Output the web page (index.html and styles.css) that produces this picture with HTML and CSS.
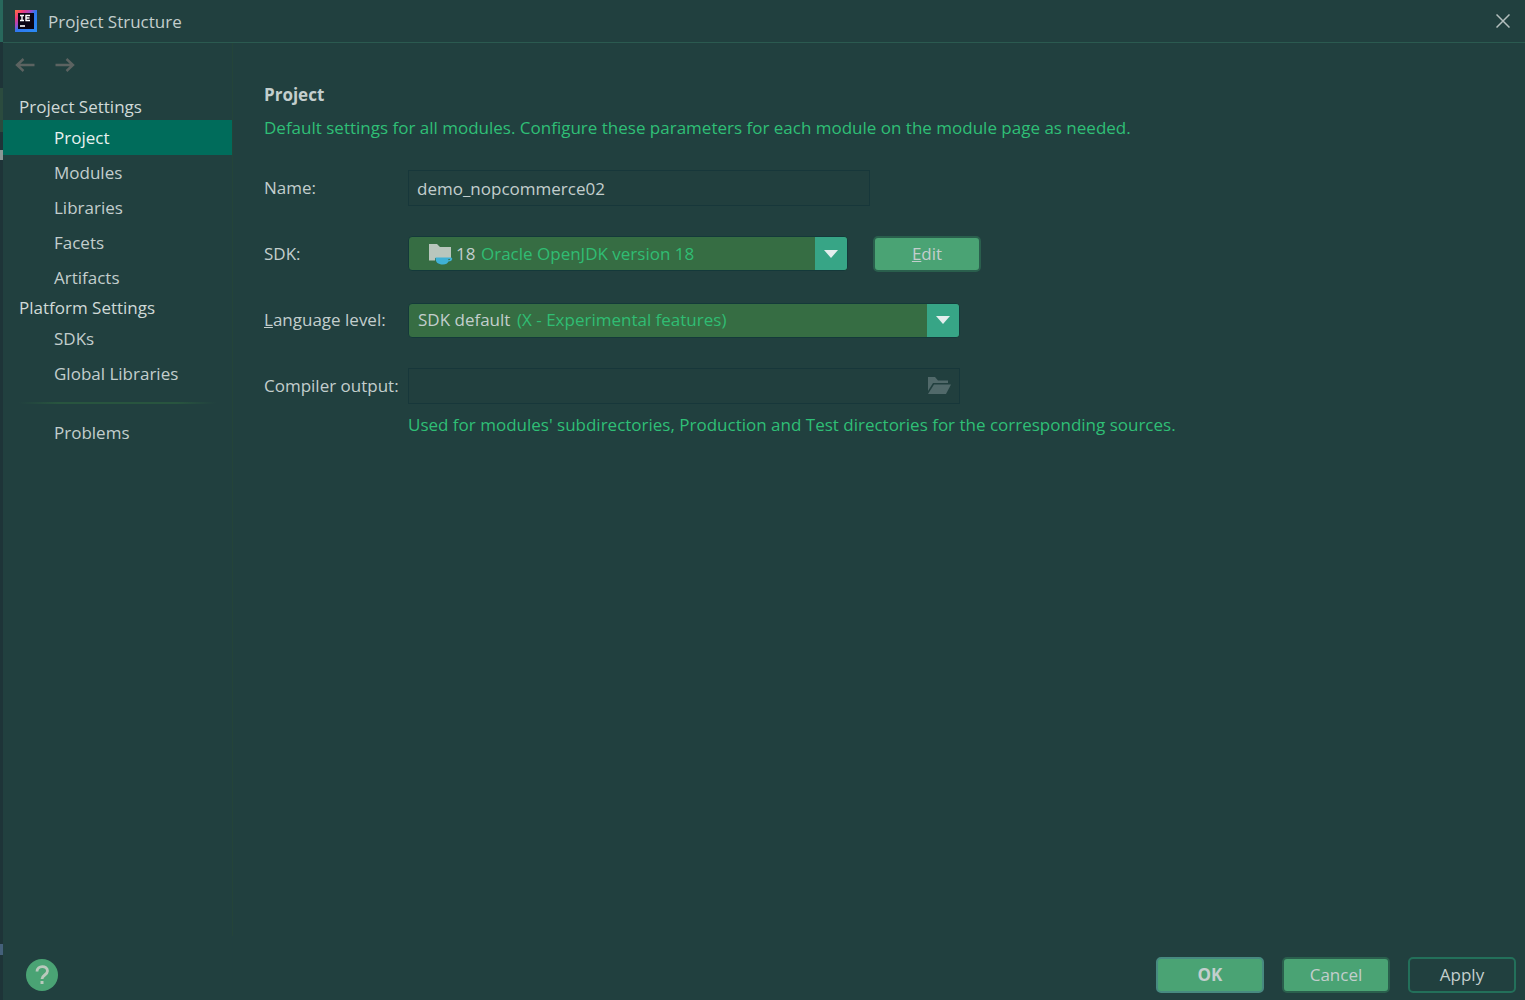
FILE: index.html
```html
<!DOCTYPE html>
<html lang="en">
<head>
<meta charset="utf-8">
<meta name="viewport" content="width=device-width, initial-scale=1">
<title>Project Structure</title>
<link rel="stylesheet" href="styles.css">
</head>
<body>
<div class="edge" aria-hidden="true"><i class="edge-cap"></i><i class="edge-tab"></i><i class="edge-text"></i><i class="edge-mark"></i></div>
<main class="dialog">
  <header class="titlebar">
    <svg class="logo" width="22" height="22" viewBox="0 0 22 22" aria-hidden="true">
      <defs>
        <linearGradient id="brand" x1="0" y1="0" x2="1" y2="1">
          <stop offset="0" stop-color="#f97a3c"/>
          <stop offset=".2" stop-color="#f03a78"/>
          <stop offset=".38" stop-color="#a04bc4"/>
          <stop offset=".5" stop-color="#2f78f0"/>
          <stop offset="1" stop-color="#2a8cf4"/>
        </linearGradient>
      </defs>
      <path d="M0 0h22v22H0z" fill="url(#brand)"/>
      <path d="M3 3h16v16H3z" fill="#0b0412"/>
      <path d="M5 5.500h4M7 5.500v5M5 10.500h4M15 5.500h-4v5h4M11 8h3.500" fill="none" stroke="#fff" stroke-width="1.400"/>
      <path d="M5 15.200h5v1.600H5z" fill="#fff"/>
    </svg>
    <h1 class="title">Project Structure</h1>
    <button class="close" type="button" aria-label="Close">
      <svg width="14" height="14" viewBox="0 0 14 14"><path d="M0.500 0.500l13 13M13.500 0.500l-13 13" fill="none" stroke="#b4bfbe" stroke-width="1.500"/></svg>
    </button>
  </header>

  <div class="body">
    <aside class="sidebar">
      <div class="history">
        <button class="arrow" type="button" aria-label="Back">
          <svg width="20" height="14" viewBox="0 0 20 14"><path d="M19.500 7H2M8.500 1L2 7l6.500 6" fill="none" stroke="#5c6361" stroke-width="2.400"/></svg>
        </button>
        <button class="arrow" type="button" aria-label="Forward">
          <svg width="20" height="14" viewBox="0 0 20 14"><path d="M.500 7h17.500M11.500 1L18 7l-6.500 6" fill="none" stroke="#5c6361" stroke-width="2.400"/></svg>
        </button>
      </div>
      <nav class="nav">
        <h2 class="group">Project Settings</h2>
        <a class="item selected" href="#project">Project</a>
        <a class="item" href="#modules">Modules</a>
        <a class="item" href="#libraries">Libraries</a>
        <a class="item" href="#facets">Facets</a>
        <a class="item" href="#artifacts">Artifacts</a>
        <h2 class="group">Platform Settings</h2>
        <a class="item" href="#sdks">SDKs</a>
        <a class="item" href="#global">Global Libraries</a>
        <hr class="rule">
        <a class="item" href="#problems">Problems</a>
      </nav>
    </aside>

    <section class="content">
      <h2 class="heading">Project</h2>
      <p class="hint">Default settings for all modules. Configure these parameters for each module on the module page as needed.</p>
      <form class="form">
        <label for="name">Name:</label>
        <input class="field name" id="name" type="text" value="demo_nopcommerce02">

        <label for="sdk">SDK:</label>
        <div class="row">
          <div class="combo sdk">
            <select id="sdk"><option>18</option></select>
            <span class="detail">Oracle OpenJDK version 18</span>
            <svg class="sdk-icon" width="24" height="22" viewBox="0 0 24 22" aria-hidden="true">
              <path d="M0 1h8l3 3h11v11H6v2.500H0z" fill="#b9c6bd"/>
              <path d="M6.500 14.500h15.500c2 0 1.800 4-2.500 4-1 2-2.500 3-5.500 3-5 0-7.500-2-7.500-7z" fill="#3fb1d6"/>
              <path d="M19.500 16h1.500c0 .8-.5 1.200-1.800 1.200z" fill="#366b46"/>
            </svg>
            <span class="drop" aria-hidden="true"><svg width="14" height="8" viewBox="0 0 14 8"><path d="M0 0h14L7 8z" fill="#e4eeee"/></svg></span>
          </div>
          <button class="btn edit" type="button"><u>E</u>dit</button>
        </div>

        <label for="level"><u>L</u>anguage level:</label>
        <div class="combo level">
          <select id="level"><option>SDK default</option></select>
          <span class="detail">(X - Experimental features)</span>
          <span class="drop" aria-hidden="true"><svg width="14" height="8" viewBox="0 0 14 8"><path d="M0 0h14L7 8z" fill="#e4eeee"/></svg></span>
        </div>

        <label for="output">Compiler output:</label>
        <div class="field browse">
          <input id="output" type="text">
          <button class="folder" type="button" aria-label="Browse">
            <svg width="23" height="18" viewBox="0 0 23 18"><path d="M0 0h7l3 3.500h10V6H5L0 14z" fill="#51696a"/><path d="M6 7.500h17L18 17H0z" fill="#51696a"/></svg>
          </button>
        </div>
      </form>
      <p class="hint output-hint">Used for modules' subdirectories, Production and Test directories for the corresponding sources.</p>
    </section>
  </div>

  <footer class="footer">
    <button class="help" type="button" aria-label="Help">
      <svg width="32" height="32" viewBox="0 0 32 32"><circle cx="16" cy="16" r="16" fill="#4aa374"/><path d="M11 12.500C11 6 21.500 6 21.500 12c0 4-5.500 4-5.500 8" fill="none" stroke="#b9c9bd" stroke-width="2.800"/><path d="M14.500 22h3v3h-3z" fill="#b9c9bd"/></svg>
    </button>
    <div class="actions">
      <button class="btn ok" type="submit">OK</button>
      <button class="btn" type="button">Cancel</button>
      <button class="btn apply" type="button">Apply</button>
    </div>
  </footer>
</main>
</body>
</html>
```
FILE: styles.css
```css
* { box-sizing: border-box; }

body {
  margin: 0;
  min-height: 100vh;
  display: flex;
  background: #21403f;
  color: #c3cecd;
  font: 17px/24px "Open Sans", "Noto Sans", sans-serif;
}

h1, h2, p { margin: 0; font-size: inherit; font-weight: 400; }
button, input, select { font: inherit; color: inherit; }
button { padding: 0; border: 0; background: none; }
svg { display: block; }

/* sliver of the editor window behind the dialog */
.edge {
  width: 3px;
  display: flex;
  flex-direction: column;
  background: #1e3438;
}
.edge-cap { height: 42px; background: #28685c; }
.edge-tab { height: 44px; margin-top: 46px; background: #2b4b3e; }
.edge-text { height: 10px; margin-top: 18px; background: #8a9795; }
.edge-mark { height: 11px; margin-top: 784px; background: #44607a; }

.dialog { flex: 1; display: flex; flex-direction: column; }

.titlebar {
  height: 43px;
  display: flex;
  align-items: center;
  padding: 0 15px 0 12px;
  border-bottom: 1px solid #2b5a50;
}
.title { flex: 1; margin-left: 11px; padding-top: 2px; }

.body { flex: 1; display: flex; }

.sidebar {
  width: 230px;
  border-right: 1px solid #244439;
}
.history { display: flex; gap: 20px; padding: 15px 12px 22px; }
.group { padding-left: 16px; line-height: 26px; color: #d0dad8; }
.item {
  display: block;
  padding-left: 51px;
  line-height: 35px;
  color: inherit;
  text-decoration: none;
}
.selected { background: #006c5b; color: #e8f2f0; }
.rule {
  height: 2px;
  margin: 11px 16px;
  border: 0;
  background: linear-gradient(90deg, transparent, #28553f 20%, #28553f 80%, transparent);
}

.content { flex: 1; padding: 40px 31px; }
.heading { font-weight: 700; }
.hint { margin-top: 9px; color: #2fbf76; }

.form {
  display: grid;
  grid-template-columns: 144px 1fr;
  grid-auto-rows: 36px;
  row-gap: 30px;
  align-items: center;
  margin-top: 30px;
}
.output-hint { padding-left: 144px; }
.row { display: flex; gap: 25px; }

.field {
  height: 36px;
  border: 1px solid #17373a;
  background: #213f3e;
}
.name { width: 462px; padding: 0 8px; }
.browse { width: 552px; display: flex; align-items: center; padding-right: 8px; }
.browse input { flex: 1; border: 0; background: none; }

.combo {
  height: 35px;
  display: grid;
  grid-template-columns: 1fr 32px;
  align-items: center;
  overflow: hidden;
  border: 1px solid #14393a;
  border-radius: 4px;
  background: #366d43;
}
.combo > * { grid-row: 1; }
.combo select {
  grid-column: 1 / 3;
  height: 33px;
  padding: 0 9px;
  border: 0;
  appearance: none;
  background: none;
}
.combo .detail { grid-column: 1; pointer-events: none; color: #30bd73; }
.combo .drop {
  grid-column: 2;
  height: 33px;
  display: grid;
  place-items: center;
  pointer-events: none;
  background: #37a586;
}
.sdk { width: 440px; }
.sdk select { padding-left: 47px; }
.sdk .detail { padding-left: 72px; }
.sdk-icon { grid-column: 1; margin-left: 20px; pointer-events: none; }
.level { width: 552px; }
.level .detail { padding-left: 108px; }

.btn {
  width: 108px;
  height: 36px;
  border: 2px solid #2a5f4d;
  border-radius: 5px;
  background: #4aa374;
}

.footer {
  display: flex;
  justify-content: space-between;
  align-items: center;
  padding: 21px 9px 7px 23px;
}
.actions { display: flex; gap: 18px; }
.ok { border-color: #478a80; font-weight: 700; }
.apply { border-color: #23705a; background: none; }
```
